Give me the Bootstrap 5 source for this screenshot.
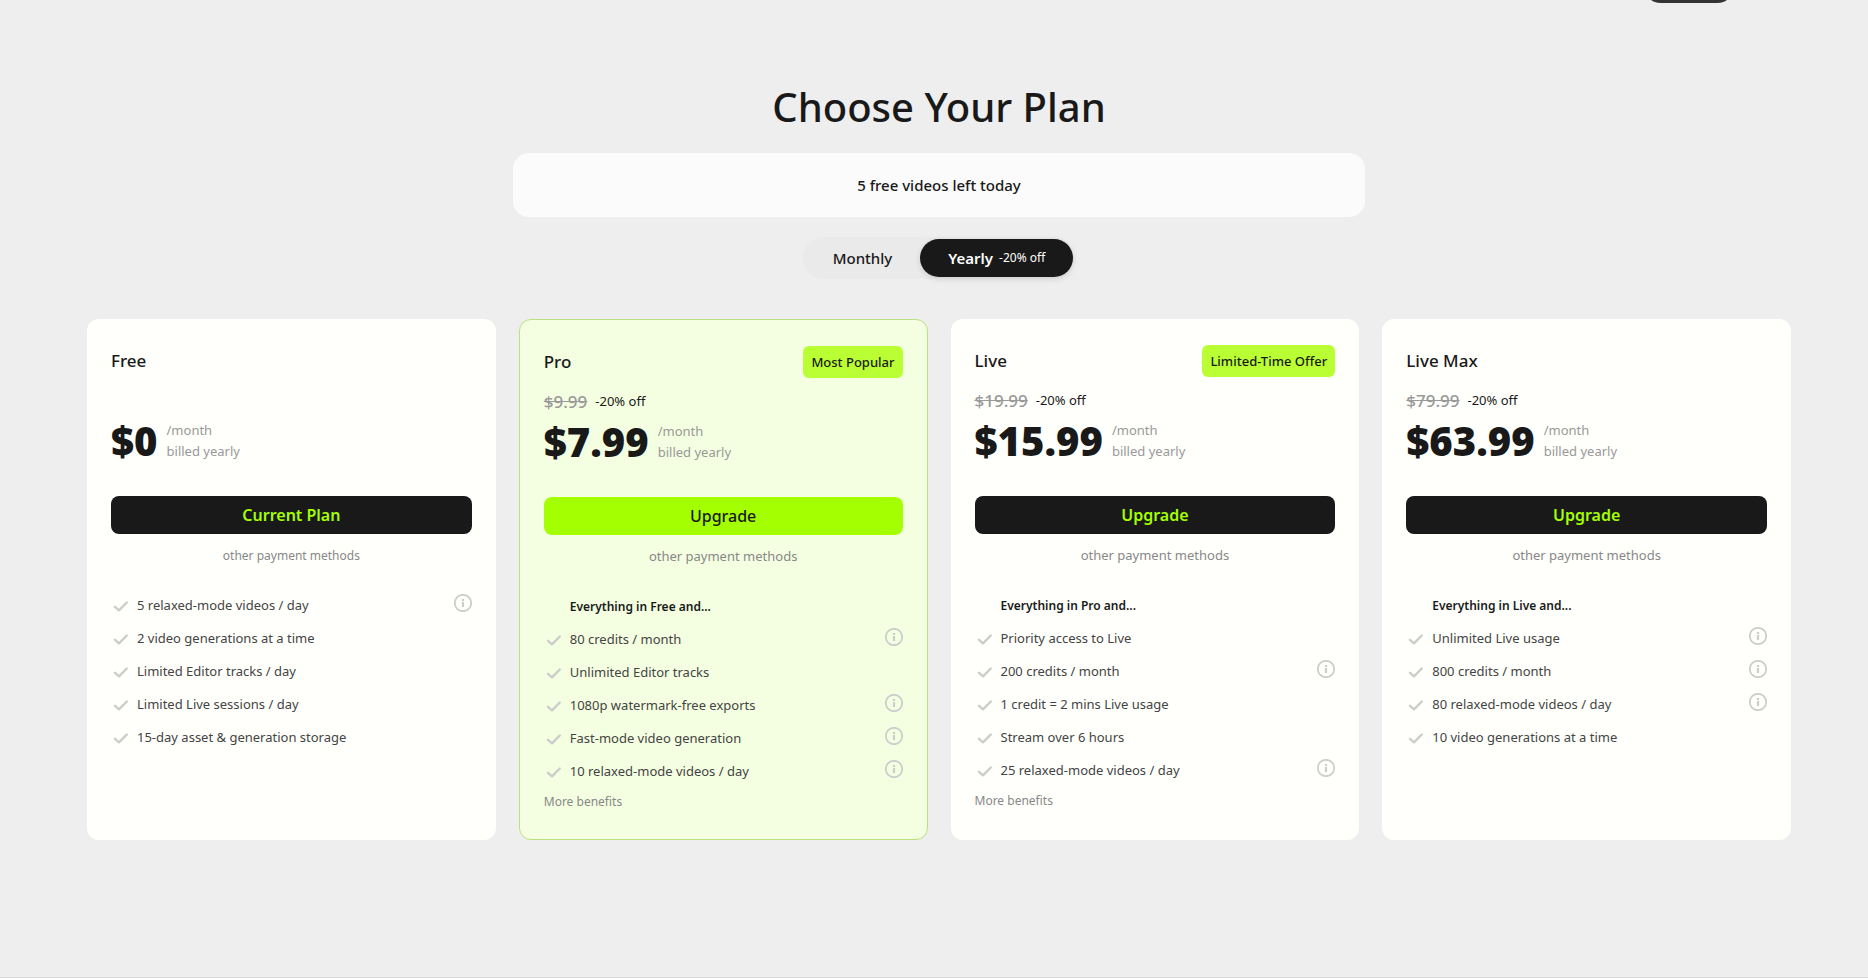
<!DOCTYPE html>
<html lang="en">
<head>
<meta charset="utf-8">
<meta name="viewport" content="width=device-width, initial-scale=1">
<title>Choose Your Plan</title>
<link href="https://cdn.jsdelivr.net/npm/bootstrap@5.3.0/dist/css/bootstrap.min.css" rel="stylesheet">
<style>
  body { font-family: "Noto Sans", "Open Sans", sans-serif; font-size: 13px; line-height: 21px; color: #191919; background: #eee; }
  .page { min-height: 100vh; border-bottom: 1px solid #d9d9d9; padding: 0 77px 0 87px; }
  .top-strip { height: 3px; padding-right: 56px; }
  .top-pill { width: 92px; height: 36px; background: #333; border-radius: 18px; }
  .page-title { font-size: 40px; line-height: 56px; font-weight: 500; margin: 76px 0 18px; }
  .quota { width: 50%; height: 64px; border-radius: 16px; background: #fbfbfb; font-size: 15px; font-weight: 500; }
  .cycle { margin: 20px 0 40px; padding: 2px; border-radius: 21px; background: #eaeaea; }
  .cycle .btn { height: 38px; border: 0; border-radius: 19px; padding: 0 28px; font-size: 15px; font-weight: 500; color: #191919; }
  .cycle .btn-check:checked + .btn { background: #191919; color: #fff; font-weight: 600; gap: 6px; box-shadow: 0 2px 6px rgba(0,0,0,.12); }
  .cycle .off { font-size: 12px; font-weight: 400; }
  .plans { gap: 23px; display: grid; grid-template-columns: repeat(4, minmax(0, 1fr)); }
  .plan { background: #fffffb; border-radius: 12px; padding: 26px 24px 27px; }
  .plan.featured { background: #f4ffe1; border: 1px solid #bce080; }
  .plan-head { height: 32px; }
  .plan-name { font-size: 17px; font-weight: 500; line-height: 24px; }
  .plan-tag { background: #b9ff33; border-radius: 6px; padding: 0 8px; line-height: 32px; font-weight: 500; }
  .old-row { height: 30px; margin-top: 8px; gap: 8px; }
  .old-row del { font-size: 17px; font-weight: 500; color: #999; }
  .price-row { margin: 5px 0 34px; gap: 9px; height: 42px; }
  .price { font-size: 40px; line-height: 42px; font-weight: 900; }
  .muted { color: #999; }
  .btn-plan { height: 38px; padding: 0; border: 0; border-radius: 8px; font-size: 16px; font-weight: 600; }
  .btn-plan, .btn-plan:hover { background: #191919; color: #a4ff00; }
  .featured .btn-plan, .featured .btn-plan:hover { background: #a4ff00; color: #191919; font-weight: 500; }
  .quiet-link { color: #888; text-decoration: none; }
  .pay { margin: 11px 0 23px; }
  .current .pay { font-size: 12px; }
  .perks li { height: 33px; color: #444; gap: 6px; }
  .perks .lead-in { font-size: 12px; font-weight: 600; color: #191919; padding-left: 26px; }
  .tick { width: 20px; height: 20px; }
  .tip { width: 18px; height: 18px; margin-bottom: 6px; }
  .tip svg { display: block; }
  .more { margin-top: 3px; font-size: 12px; }
</style>
</head>
<body>
<svg class="d-none" aria-hidden="true">
  <symbol id="tick" viewBox="0 0 20 20"><path d="M4 10.800 8 14.300 15.800 6.500" fill="none" stroke="#ccc" stroke-width="2.400" stroke-linecap="round" stroke-linejoin="round"/></symbol>
  <symbol id="info" viewBox="0 0 18 18"><circle cx="9" cy="9" r="8.200" fill="none" stroke="#ccc" stroke-width="1.700"/><path d="M9 5v2M9 8v5" stroke="#ccc" stroke-width="2.200"/></symbol>
</svg>
<div class="page">
  <div class="top-strip d-flex align-items-end justify-content-end overflow-hidden"><div class="top-pill flex-shrink-0"></div></div>
  <main class="d-flex flex-column align-items-center">
    <h1 class="page-title">Choose Your Plan</h1>
    <div class="quota d-flex align-items-center justify-content-center">5 free videos left today</div>
    <div class="cycle d-flex">
      <input class="btn-check" type="radio" name="cycle" id="monthly"><label class="btn d-flex align-items-center" for="monthly">Monthly</label>
      <input class="btn-check" type="radio" name="cycle" id="yearly" checked><label class="btn d-flex align-items-center" for="yearly">Yearly <span class="off">-20% off</span></label>
    </div>
    <div class="plans w-100">
      <section class="plan current">
        <div class="plan-head d-flex align-items-center justify-content-between"><h2 class="plan-name m-0">Free</h2></div>
        <div class="old-row"></div>
        <div class="price-row d-flex align-items-center"><span class="price">$0</span><span class="muted">/month<br>billed yearly</span></div>
        <button type="button" class="btn btn-plan w-100">Current Plan</button>
        <div class="pay text-center"><a class="quiet-link" href="#">other payment methods</a></div>
        <ul class="perks list-unstyled m-0">
          <li class="d-flex align-items-center"><svg class="tick"><use href="#tick"/></svg>5 relaxed-mode videos / day<button type="button" class="tip btn p-0 border-0 ms-auto" aria-label="Details"><svg width="18" height="18"><use href="#info"/></svg></button></li>
          <li class="d-flex align-items-center"><svg class="tick"><use href="#tick"/></svg>2 video generations at a time</li>
          <li class="d-flex align-items-center"><svg class="tick"><use href="#tick"/></svg>Limited Editor tracks / day</li>
          <li class="d-flex align-items-center"><svg class="tick"><use href="#tick"/></svg>Limited Live sessions / day</li>
          <li class="d-flex align-items-center"><svg class="tick"><use href="#tick"/></svg>15-day asset &amp; generation storage</li>
        </ul>
      </section>
      <section class="plan featured">
        <div class="plan-head d-flex align-items-center justify-content-between"><h2 class="plan-name m-0">Pro</h2><span class="plan-tag">Most Popular</span></div>
        <div class="old-row d-flex align-items-center"><del>$9.99</del><span>-20% off</span></div>
        <div class="price-row d-flex align-items-center"><span class="price">$7.99</span><span class="muted">/month<br>billed yearly</span></div>
        <button type="button" class="btn btn-plan w-100">Upgrade</button>
        <div class="pay text-center"><a class="quiet-link" href="#">other payment methods</a></div>
        <ul class="perks list-unstyled m-0">
          <li class="lead-in d-flex align-items-center">Everything in Free and...</li>
          <li class="d-flex align-items-center"><svg class="tick"><use href="#tick"/></svg>80 credits / month<button type="button" class="tip btn p-0 border-0 ms-auto" aria-label="Details"><svg width="18" height="18"><use href="#info"/></svg></button></li>
          <li class="d-flex align-items-center"><svg class="tick"><use href="#tick"/></svg>Unlimited Editor tracks</li>
          <li class="d-flex align-items-center"><svg class="tick"><use href="#tick"/></svg>1080p watermark-free exports<button type="button" class="tip btn p-0 border-0 ms-auto" aria-label="Details"><svg width="18" height="18"><use href="#info"/></svg></button></li>
          <li class="d-flex align-items-center"><svg class="tick"><use href="#tick"/></svg>Fast-mode video generation<button type="button" class="tip btn p-0 border-0 ms-auto" aria-label="Details"><svg width="18" height="18"><use href="#info"/></svg></button></li>
          <li class="d-flex align-items-center"><svg class="tick"><use href="#tick"/></svg>10 relaxed-mode videos / day<button type="button" class="tip btn p-0 border-0 ms-auto" aria-label="Details"><svg width="18" height="18"><use href="#info"/></svg></button></li>
        </ul>
        <div class="more"><a class="quiet-link" href="#">More benefits</a></div>
      </section>
      <section class="plan">
        <div class="plan-head d-flex align-items-center justify-content-between"><h2 class="plan-name m-0">Live</h2><span class="plan-tag">Limited-Time Offer</span></div>
        <div class="old-row d-flex align-items-center"><del>$19.99</del><span>-20% off</span></div>
        <div class="price-row d-flex align-items-center"><span class="price">$15.99</span><span class="muted">/month<br>billed yearly</span></div>
        <button type="button" class="btn btn-plan w-100">Upgrade</button>
        <div class="pay text-center"><a class="quiet-link" href="#">other payment methods</a></div>
        <ul class="perks list-unstyled m-0">
          <li class="lead-in d-flex align-items-center">Everything in Pro and...</li>
          <li class="d-flex align-items-center"><svg class="tick"><use href="#tick"/></svg>Priority access to Live</li>
          <li class="d-flex align-items-center"><svg class="tick"><use href="#tick"/></svg>200 credits / month<button type="button" class="tip btn p-0 border-0 ms-auto" aria-label="Details"><svg width="18" height="18"><use href="#info"/></svg></button></li>
          <li class="d-flex align-items-center"><svg class="tick"><use href="#tick"/></svg>1 credit = 2 mins Live usage</li>
          <li class="d-flex align-items-center"><svg class="tick"><use href="#tick"/></svg>Stream over 6 hours</li>
          <li class="d-flex align-items-center"><svg class="tick"><use href="#tick"/></svg>25 relaxed-mode videos / day<button type="button" class="tip btn p-0 border-0 ms-auto" aria-label="Details"><svg width="18" height="18"><use href="#info"/></svg></button></li>
        </ul>
        <div class="more"><a class="quiet-link" href="#">More benefits</a></div>
      </section>
      <section class="plan">
        <div class="plan-head d-flex align-items-center justify-content-between"><h2 class="plan-name m-0">Live Max</h2></div>
        <div class="old-row d-flex align-items-center"><del>$79.99</del><span>-20% off</span></div>
        <div class="price-row d-flex align-items-center"><span class="price">$63.99</span><span class="muted">/month<br>billed yearly</span></div>
        <button type="button" class="btn btn-plan w-100">Upgrade</button>
        <div class="pay text-center"><a class="quiet-link" href="#">other payment methods</a></div>
        <ul class="perks list-unstyled m-0">
          <li class="lead-in d-flex align-items-center">Everything in Live and...</li>
          <li class="d-flex align-items-center"><svg class="tick"><use href="#tick"/></svg>Unlimited Live usage<button type="button" class="tip btn p-0 border-0 ms-auto" aria-label="Details"><svg width="18" height="18"><use href="#info"/></svg></button></li>
          <li class="d-flex align-items-center"><svg class="tick"><use href="#tick"/></svg>800 credits / month<button type="button" class="tip btn p-0 border-0 ms-auto" aria-label="Details"><svg width="18" height="18"><use href="#info"/></svg></button></li>
          <li class="d-flex align-items-center"><svg class="tick"><use href="#tick"/></svg>80 relaxed-mode videos / day<button type="button" class="tip btn p-0 border-0 ms-auto" aria-label="Details"><svg width="18" height="18"><use href="#info"/></svg></button></li>
          <li class="d-flex align-items-center"><svg class="tick"><use href="#tick"/></svg>10 video generations at a time</li>
        </ul>
      </section>
    </div>
  </main>
</div>
<script src="https://cdn.jsdelivr.net/npm/bootstrap@5.3.0/dist/js/bootstrap.bundle.min.js"></script>
</body>
</html>
